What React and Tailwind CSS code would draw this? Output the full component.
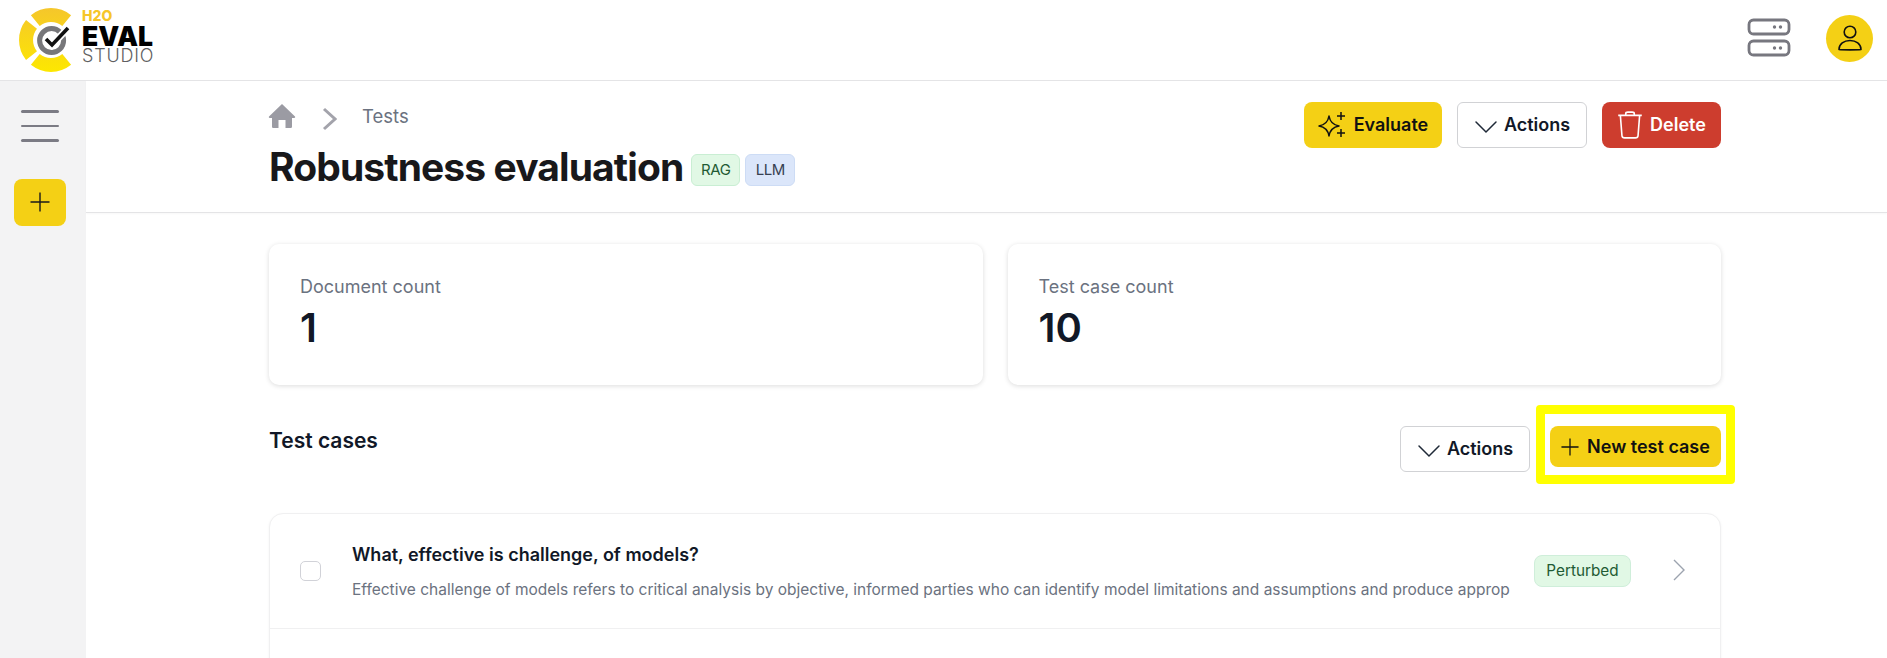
import React from 'react';

const font = { fontFamily: 'Inter, sans-serif' };

function Logo() {
  return (
    <div className="flex items-center">
      <svg width="66" height="66" viewBox="0 0 66 66" className="ml-[18px] shrink-0">
        <defs>
          <linearGradient id="ring" gradientUnits="userSpaceOnUse" x1="0" y1="0" x2="0" y2="66">
            <stop offset="0" stopColor="#f5c62c" />
            <stop offset="1" stopColor="#fde800" />
          </linearGradient>
        </defs>
        <g fill="none" stroke="url(#ring)" strokeWidth="14">
          <path d="M17.300 13.600 A 25 25 0 0 1 48.700 13.600" />
          <path d="M48.700 52.400 A 25 25 0 0 1 17.300 52.400" />
          <path d="M13.500 17.400 A 25 25 0 0 0 13.500 48.600" />
        </g>
        <circle cx="33.600" cy="33.600" r="12" fill="none" stroke="#77777a" strokeWidth="5" />
        <path d="M28 32 L34 38 L50 21" fill="none" stroke="#fff" strokeWidth="7" />
        <path d="M28 32 L34 38 L50 21" fill="none" stroke="#111" strokeWidth="3.600" />
      </svg>
      <div className="mb-[7px] ml-[-2px] flex flex-col">
        <span className="h-[14px] text-[14px] font-extrabold leading-[14px] text-[#f6c629]">H2O</span>
        <span className="mt-[2px] h-[22px] text-[26.500px] font-black leading-[22px] text-black">EVAL</span>
        <span className="mt-[1px] h-[16px] text-[18px] font-light leading-[16px] tracking-[0.8px] text-[#5f5f62]">STUDIO</span>
      </div>
    </div>
  );
}

function PlusIcon({ size = 20, color = '#1a1a1a' }) {
  return (
    <svg width={size} height={size} viewBox="0 0 20 20" fill="none" stroke={color} strokeWidth="1.4">
      <path d="M10 0.5V19.5M0.5 10H19.5" />
    </svg>
  );
}

function ChevronDown() {
  return (
    <svg width="24" height="14" viewBox="0 0 24 14" fill="none" stroke="#1f2937" strokeWidth="1.5" strokeLinecap="round">
      <path d="M2 2L12 12L22 2" />
    </svg>
  );
}

function ActionsButton() {
  return (
    <button className="flex h-[46px] w-[130px] items-center justify-center gap-[6px] rounded-[6px] border border-[#d1d2d5] bg-white pb-[2px] text-[18px] font-semibold text-[#111827]">
      <span className="mt-[6px]"><ChevronDown /></span>
      Actions
    </button>
  );
}

function StatCard({ label, value }) {
  return (
    <div className="h-[141px] flex-1 rounded-[10px] bg-white px-[31px] pt-[31px] shadow-[0_1px_5px_rgba(0,0,0,0.14)]">
      <div className="text-[18px] leading-[24px] text-[#6b7280]">{label}</div>
      <div className="mt-[7px] text-[40px] font-semibold leading-[44px] text-[#111827]">{value}</div>
    </div>
  );
}

export default function App() {
  return (
    <div className="h-[658px] overflow-hidden bg-white" style={font}>
      <header className="flex h-[81px] items-center justify-between border-b border-[#e4e4e6] bg-white">
        <Logo />
        <div className="mb-[4px] mr-[14px] flex items-center gap-[35px]">
          <svg width="44" height="40" viewBox="0 0 44 40" fill="none" stroke="#77777f" strokeWidth="2.8">
            <rect x="2" y="2" width="40" height="14" rx="4.5" />
            <rect x="2" y="23" width="40" height="14" rx="4.5" />
            <circle cx="27.5" cy="9" r="1.7" fill="#77777f" stroke="none" />
            <circle cx="33.5" cy="9" r="1.7" fill="#77777f" stroke="none" />
            <circle cx="27.5" cy="30" r="1.7" fill="#77777f" stroke="none" />
            <circle cx="33.5" cy="30" r="1.7" fill="#77777f" stroke="none" />
          </svg>
          <div className="flex h-[47px] w-[47px] items-center justify-center rounded-full bg-[#f4d015]">
            <svg width="26" height="28" viewBox="0 0 26 28" fill="none" stroke="#111" strokeWidth="1.6" strokeLinejoin="round">
              <circle cx="13" cy="8" r="5.8" />
              <path d="M2 25.5C2 20 7 16.5 13 16.5S24 20 24 25.5C20.5 26 5.5 26 2 25.5Z" />
            </svg>
          </div>
        </div>
      </header>

      <div className="flex h-[577px]">
        <aside className="flex w-[86px] shrink-0 flex-col items-center bg-[#f3f3f4] pr-[6px] pt-[29px]">
          <div className="flex w-[38px] flex-col gap-[12px]">
            <span className="h-[2.500px] rounded-full bg-[#7b7b84]" />
            <span className="h-[2.500px] rounded-full bg-[#7b7b84]" />
            <span className="h-[2.500px] rounded-full bg-[#7b7b84]" />
          </div>
          <button className="mt-[37px] flex h-[47px] w-[52px] items-center justify-center rounded-[8px] bg-[#f4d015]">
            <PlusIcon />
          </button>
        </aside>

        <main className="min-w-0 flex-1">
          <div className="h-[132px] border-b border-[#e4e4e6] pl-[183px] pr-[166px] shadow-[0_1px_2px_rgba(0,0,0,0.03)]">
            <div className="flex justify-between">
              <div>
                <div className="mt-[19px] flex h-[34px] items-center text-[#6b7280]">
                  <svg width="28" height="26" viewBox="0 0 28 26" fill="#9b9ba3" className="ml-[-1px] mt-[-2px]">
                    <path d="M14 1L27 13.5C27.5 14 27 15 26.3 15H24V23.5C24 24.5 23.3 25 22.5 25H17.5V17H10.500V25H5.500C4.700 25 4 24.500 4 23.500V15H1.700C1 15 0.500 14 1 13.500Z" />
                  </svg>
                  <svg width="15" height="24" viewBox="0 0 15 24" fill="none" stroke="#a3a3ab" strokeWidth="3" className="ml-[26px] mt-[4px]">
                    <path d="M2 2L13 12L2 22" />
                  </svg>
                  <span className="ml-[25px] text-[18.500px]">Tests</span>
                </div>
                <div className="mt-[11px] flex items-center">
                  <h1 className="text-[39px] font-bold leading-[44px] tracking-[-0.9px] text-[#18181b]">Robustness evaluation</h1>
                  <span className="ml-[8px] mt-[6px] flex h-[32px] w-[49px] items-center justify-center rounded-[6px] border border-[#c9eed3] bg-[#e1f8e5] text-[15px] tracking-[-0.4px] text-[#1f5b34]">RAG</span>
                  <span className="ml-[5px] mt-[6px] flex h-[32px] w-[50px] items-center justify-center rounded-[6px] border border-[#cddcf5] bg-[#dbe6fa] text-[15px] tracking-[-0.4px] text-[#374151]">LLM</span>
                </div>
              </div>
              <div className="flex gap-[15px] pt-[21px]">
                <button className="flex h-[46px] w-[138px] items-center justify-center gap-[6px] rounded-[8px] bg-[#f4d015] pb-[2px] text-[18px] font-semibold text-[#111]">
                  <svg width="30" height="30" viewBox="0 0 30 30" fill="none" stroke="#111" strokeWidth="1.500" strokeLinejoin="round" className="mt-[2px]">
                    <path d="M11 6C12 12 15 15 21 16C15 17 12 20 11 26C10 20 7 17 1 16C7 15 10 12 11 6Z" />
                    <path d="M23 2V10M19 6H27M23 19V27M19 23H27" />
                  </svg>
                  Evaluate
                </button>
                <ActionsButton />
                <button className="flex h-[46px] w-[119px] items-center justify-center gap-[7px] rounded-[8px] bg-[#cd3d2e] pb-[2px] text-[18px] font-semibold text-white">
                  <svg width="26" height="30" viewBox="0 0 24 28" fill="none" stroke="#fff" strokeWidth="1.500" strokeLinejoin="round" className="mt-[2px]">
                    <path d="M1 5H23M8 5V3.500C8 2.500 9 2 10 2H14C15 2 16 2.500 16 3.500V5M3 5L4.500 24C4.600 25.500 5.500 26 7 26H17C18.500 26 19.400 25.500 19.500 24L21 5" />
                  </svg>
                  Delete
                </button>
              </div>
            </div>
          </div>

          <div className="pl-[183px] pr-[166px] pt-[31px]">
            <div className="flex gap-[25px]">
              <StatCard label="Document count" value="1" />
              <StatCard label="Test case count" value="10" />
            </div>

            <div className="mt-[41px] flex items-start justify-between">
              <h2 className="mt-[1px] text-[21px] font-semibold leading-[28px] text-[#111827]">Test cases</h2>
              <div className="flex items-start gap-[20px]">
                <ActionsButton />
                <div className="relative">
                  <button className="flex h-[41px] w-[171px] items-center justify-center gap-[8px] rounded-[8px] bg-[#f4d015] text-[18px] font-semibold text-[#111]">
                    <PlusIcon size={18} color="#111" />
                    New test case
                  </button>
                  <div className="absolute -left-[14px] -right-[14px] -top-[21px] -bottom-[17px] rounded-[4px] border-[9px] border-[#ffff00]" />
                </div>
              </div>
            </div>

            <div className="mt-[41px] rounded-[14px] border border-[#f0f0f1] bg-white shadow-[0_1px_3px_rgba(0,0,0,0.05)]">
              <div className="flex h-[115px] items-center border-b border-[#f0f0f1] pl-[30px] pr-[35px]">
                <span className="h-[20px] w-[21px] shrink-0 rounded-[5px] border border-[#d1d2d8] bg-white" />
                <div className="ml-[31px] mt-[2px] min-w-0 flex-1">
                  <div className="text-[18px] font-semibold leading-[24px] text-[#111827]">What, effective is challenge, of models?</div>
                  <div className="mt-[11px] h-[24px] overflow-hidden whitespace-nowrap text-[15.500px] leading-[24px] text-[#6b7280]">
                    Effective challenge of models refers to critical analysis by objective, informed parties who can identify model limitations and assumptions and produce approp
                  </div>
                </div>
                <span className="ml-[22px] flex h-[32px] w-[97px] shrink-0 items-center justify-center rounded-[8px] border border-[#cfeeda] bg-[#e1f8e5] text-[15.300px] text-[#1f5b34]">Perturbed</span>
                <svg width="12" height="22" viewBox="0 0 12 22" fill="none" stroke="#9ca3af" strokeWidth="1.400" className="ml-[42px] mb-[3px] shrink-0">
                  <path d="M1 1L11 11L1 21" />
                </svg>
              </div>
              <div className="h-[60px]" />
            </div>
          </div>
        </main>
      </div>
    </div>
  );
}
